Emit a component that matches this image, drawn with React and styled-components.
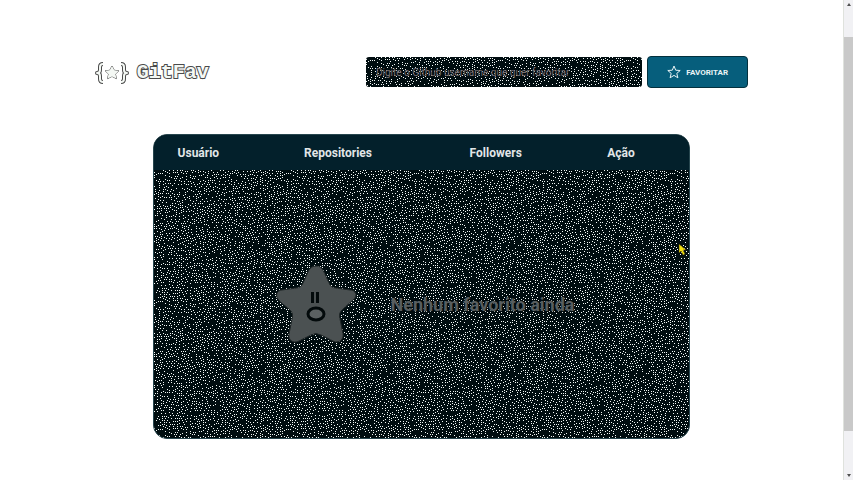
import React from "react";
import styled, { createGlobalStyle } from "styled-components";

const Global = createGlobalStyle`
  * { box-sizing: border-box; }
  body {
    margin: 0;
    background: #fff;
    font-family: Roboto, "Liberation Sans", sans-serif;
    overflow: hidden;
  }
`;

const Viewport = styled.div`
  display: flex;
  height: 100vh;
`;

const Page = styled.div`
  flex: 1;
  display: flex;
  flex-direction: column;
  align-items: center;
  gap: 46px;
  padding-top: 56px;
`;

const Header = styled.header`
  display: flex;
  align-items: center;
  justify-content: space-between;
  width: 77.5%;
`;

const Logo = styled.h1`
  display: flex;
  align-items: center;
  gap: 8px;
  margin: 0;
  padding-top: 2px;
  color: #f4f8f4;
  font: 700 20px/28px "Liberation Mono", monospace;
  -webkit-text-stroke: 2px #4a4a4a;
  paint-order: stroke fill;
`;

const LogoMark = styled.svg`
  width: 34px;
  height: 22px;
  fill: none;
  stroke-linejoin: round;
`;

const Search = styled.form`
  display: flex;
  align-items: center;
  gap: 5px;
  width: 58.5%;
`;

const Field = styled.div`
  position: relative;
  flex: 1;
  height: 30px;
  overflow: hidden;
  border-radius: 3px;
  background: #000d10;
`;

const Input = styled.input`
  position: relative;
  display: block;
  width: 100%;
  height: 100%;
  padding: 0 10px;
  border: 0;
  background: transparent;
  color: #fff;
  font: 400 10px Roboto, sans-serif;
  &::placeholder {
    color: #786f73;
    opacity: 1;
    text-shadow: 0 0 2px #000d10;
  }
`;

const FavButton = styled.button`
  display: flex;
  align-items: center;
  justify-content: center;
  gap: 5px;
  width: 101px;
  height: 32px;
  padding: 0;
  border: 1px solid #03303d;
  border-radius: 4px;
  background: #065e7c;
  color: #e9f3f5;
  font: 700 8px Roboto, sans-serif;
  text-transform: uppercase;
`;

const ButtonStar = styled.svg`
  width: 14px;
  height: 14px;
  fill: none;
  stroke: currentColor;
`;

const Panel = styled.main`
  position: relative;
  width: 63.8%;
  overflow: hidden;
  border: 1px solid #27464e;
  border-radius: 14px;
  background: #000d10;
`;

const Table = styled.table`
  width: 100%;
  table-layout: fixed;
  border-collapse: collapse;
`;

const HeadCell = styled.th`
  width: ${(p) => p.$width};
  height: 35px;
  padding: 0 0 0 24px;
  background: #03202b;
  color: #e2e6e8;
  font-size: 12px;
  line-height: 16px;
  font-weight: 700;
  text-align: left;
`;

const EmptyCell = styled.td`
  position: relative;
  height: 268px;
  padding: 0;
`;

const Empty = styled.div`
  position: relative;
  display: flex;
  align-items: center;
  justify-content: center;
  gap: 34px;
  padding-left: 6px;
  color: #585e60;
  font-size: 18px;
  font-weight: 700;
  text-shadow: 0 0 2px #000d10, 0 0 2px #000d10;
`;

const Face = styled.svg`
  width: 82px;
  height: 78px;
`;

const Grain = styled.svg`
  position: absolute;
  inset: 0;
  width: 100%;
  height: 100%;
  pointer-events: none;
`;

const Pointer = styled.svg`
  position: absolute;
  top: 108px;
  right: 3px;
  width: 8px;
  height: 13px;
`;

const Scroll = styled.div`
  display: flex;
  flex-direction: column;
  width: 10px;
  border-left: 1px solid #dfe2dd;
  background: #f1f1f4;
`;

const ScrollStep = styled.svg`
  width: 9px;
  height: 9px;
  margin: ${(p) => (p.$end ? "40px 0 0" : "0 0 28px")};
  fill: #505050;
`;

const Thumb = styled.div`
  flex: 1;
  background: #c9c9c9;
`;

// Scattered single-pixel dots that keep at least one dark pixel between them.
const TILE = 128;

function scatter(count) {
  const taken = new Set();
  let seed = 90210;
  const next = () => {
    seed = (Math.imul(seed, 1664525) + 1013904223) >>> 0;
    return Math.floor((seed / 4294967296) * TILE);
  };
  let d = "";
  for (let i = 0, placed = 0; i < count * 12 && placed < count; i += 1) {
    const x = next();
    const y = next();
    let free = true;
    for (let dx = -1; dx <= 1; dx += 1) {
      for (let dy = -1; dy <= 1; dy += 1) {
        const key = ((x + dx + TILE) % TILE) * TILE + ((y + dy + TILE) % TILE);
        if (taken.has(key)) free = false;
      }
    }
    if (free) {
      taken.add(x * TILE + y);
      d += `M${x} ${y}h1v1h-1z`;
      placed += 1;
    }
  }
  return d;
}

const DOTS = scatter(1900);

function Speckle({ id }) {
  return (
    <Grain aria-hidden="true" shapeRendering="crispEdges">
      <pattern id={id} width={TILE} height={TILE} patternUnits="userSpaceOnUse">
        <path d={DOTS} fill="#f2f7f5" />
      </pattern>
      <rect width="100%" height="100%" fill={`url(#${id})`} />
    </Grain>
  );
}

const MARK =
  "M8 2Q5 2 5 5V8Q5 11 2 11Q5 11 5 14V17Q5 20 8 20M26 2Q29 2 29 5V8Q29 11 32 11Q29 11 29 14V17Q29 20 26 20";

const columns = [
  ["Usuário", "23.6%"],
  ["Repositories", "30.9%"],
  ["Followers", "25.7%"],
  ["Ação", "19.8%"],
];

export default function App() {
  return (
    <Viewport>
      <Global />
      <Page>
        <Header>
          <Logo>
            <LogoMark viewBox="0 0 34 22" aria-hidden="true">
              <path d={MARK} stroke="#4a4a4a" strokeWidth="4" />
              <path d={MARK} stroke="#f4f8f4" strokeWidth="2" />
              <path
                d="M17 4l2.2 4.3 4.6.5-3.4 3.2 1 4.6L17 14.4l-4.4 2.2 1-4.6-3.4-3.2 4.6-.5z"
                fill="#f4f8f4"
                stroke="#4a4a4a"
              />
            </LogoMark>
            GitFav
          </Logo>
          <Search onSubmit={(e) => e.preventDefault()}>
            <Field>
              <Speckle id="field-grain" />
              <Input
                aria-label="Github username"
                placeholder="Digite o Github username que quer favoritar"
              />
            </Field>
            <FavButton type="submit">
              <ButtonStar viewBox="0 0 14 14" aria-hidden="true">
                <path d="M7 1l1.7 4.2 4.5.3-3.4 2.9 1.1 4.4L7 10.4l-3.9 2.4 1.1-4.4L.8 5.5l4.5-.3z" />
              </ButtonStar>
              Favoritar
            </FavButton>
          </Search>
        </Header>
        <Panel>
          <Table>
            <thead>
              <tr>
                {columns.map(([label, width]) => (
                  <HeadCell key={label} scope="col" $width={width}>{label}</HeadCell>
                ))}
              </tr>
            </thead>
            <tbody>
              <tr>
                <EmptyCell colSpan={4}>
                  <Speckle id="panel-grain" />
                  <Empty>
                    <Face viewBox="0 0 82 78" aria-hidden="true">
                      <path
                        d="M41 1C37 1 34 4 33 7L28 18Q26 23 21 23L7 25C2 25 0 31 3 34Q5 37 14 44Q19 48 17 54L14 69C13 75 18 79 24 76L36 70Q41 67 46 70L58 76C63 79 69 75 68 69L65 54Q63 48 68 44L78 35C83 31 81 25 75 25L61 23Q56 23 54 18L49 7C47 3 45 1 41 1Z"
                        fill="#4b5152"
                        stroke="#202728"
                      />
                      <path d="M37.5 27V38M42.5 27V38" stroke="#030a0b" strokeWidth="3" />
                      <ellipse cx="41" cy="49" rx="8" ry="6" fill="#5b6162" stroke="#030a0b" strokeWidth="3" />
                    </Face>
                    <span>Nenhum favorito ainda</span>
                  </Empty>
                </EmptyCell>
              </tr>
            </tbody>
          </Table>
          <Pointer viewBox="0 0 8 13" aria-hidden="true">
            <path d="M1 1V10L3 8L5 12L7 11L5 7H8Z" fill="#f3df12" stroke="#3b3500" strokeWidth="0.5" />
          </Pointer>
        </Panel>
      </Page>
      <Scroll aria-hidden="true">
        <ScrollStep viewBox="0 0 9 9"><path d="M3 6L5 3L7 6Z" /></ScrollStep>
        <Thumb />
        <ScrollStep $end viewBox="0 0 9 9"><path d="M3 3L5 6L7 3Z" /></ScrollStep>
      </Scroll>
    </Viewport>
  );
}
